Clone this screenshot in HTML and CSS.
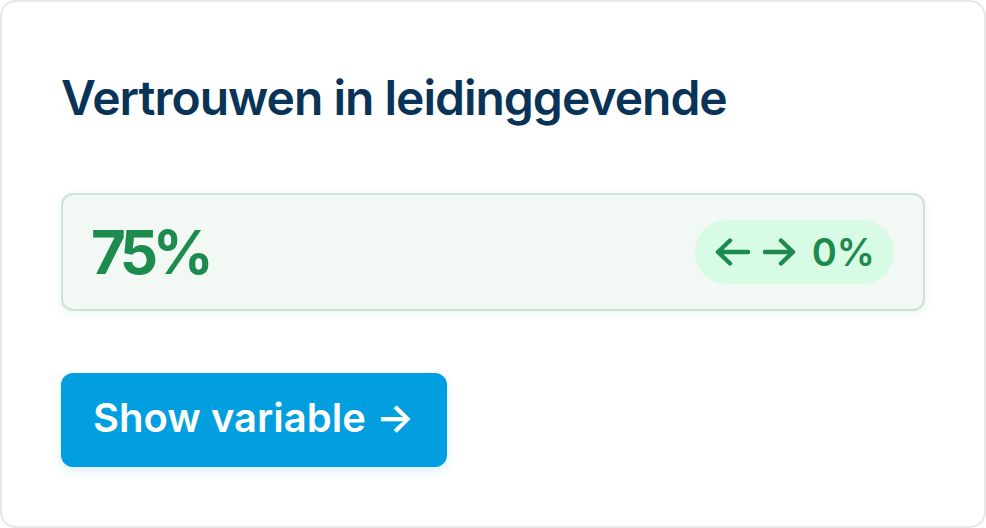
FILE: index.html
```html
<!DOCTYPE html>
<html lang="nl">
<head>
<meta charset="utf-8">
<title>Vertrouwen in leidinggevende</title>
<link rel="stylesheet" href="styles.css">
</head>
<body>
  <section class="card">
    <h2 class="card-title">Vertrouwen in leidinggevende</h2>
    <div class="metric">
      <span class="metric-value">75%</span>
      <span class="metric-change">
        <svg class="arrow" viewBox="0 0 35 28" aria-label="←"><path d="M33 14H3M15 2.5L3 14l12 11.5"/></svg>
        <svg class="arrow arrow-right" viewBox="0 0 33 28" aria-label="→"><path d="M2 14h28M18 2.5L30 14 18 25.5"/></svg>
        <span class="change-text">0%</span>
      </span>
    </div>
    <button class="btn" type="button">Show variable →</button>
  </section>
</body>
</html>
```
FILE: styles.css
```css
* { box-sizing: border-box; }
html, body { margin: 0; padding: 0; background: #ffffff; }
body { font-family: Inter, "Noto Sans", "Liberation Sans", sans-serif; }

.card {
  width: 986px;
  height: 528px;
  border: 2px solid #e5e9e9;
  border-radius: 16px;
  background: #ffffff;
  padding: 60px 59px 58px 59px;
  display: flex;
  flex-direction: column;
  align-items: flex-start;
}

.card-title {
  margin: 0;
  font-size: 48px;
  line-height: 72px;
  font-weight: 600;
  color: #0a3457;
  letter-spacing: -1px;
}

.metric {
  margin-top: 59px;
  align-self: stretch;
  display: flex;
  align-items: center;
  justify-content: space-between;
  padding: 25px 29px 25px 28px;
  background: #f2f8f4;
  border: 2px solid #cce4d6;
  border-radius: 12px;
  box-shadow: 0 2px 8px rgba(30, 138, 78, 0.10);
}

.metric-value {
  font-size: 60px;
  line-height: 62px;
  font-weight: 700;
  color: #1d8a4e;
  letter-spacing: -5.5px;
}

.metric-change {
  height: 64px;
  display: flex;
  align-items: center;
  padding: 0 19px 0 20px;
  border-radius: 32px;
  background: #d7fbe4;
  color: #1d8a4e;
}

.arrow {
  width: 35px;
  height: 28px;
  fill: none;
  stroke: #1d8a4e;
  stroke-width: 4.4;
  stroke-linecap: round;
  stroke-linejoin: round;
}

.arrow-right {
  margin-left: 13px;
  width: 33px;
}

.change-text {
  margin-left: 16px;
  font-size: 38px;
  line-height: 46px;
  font-weight: 600;
}

.btn {
  margin-top: 62px;
  border: 0;
  border-radius: 12px;
  background: #019fe0;
  color: #ffffff;
  font-family: inherit;
  font-size: 40px;
  line-height: 60px;
  font-weight: 600;
  padding: 15px 33px 19px 32px;
  box-shadow: 0 4px 12px rgba(1, 159, 224, 0.15);
  cursor: pointer;
}
```
